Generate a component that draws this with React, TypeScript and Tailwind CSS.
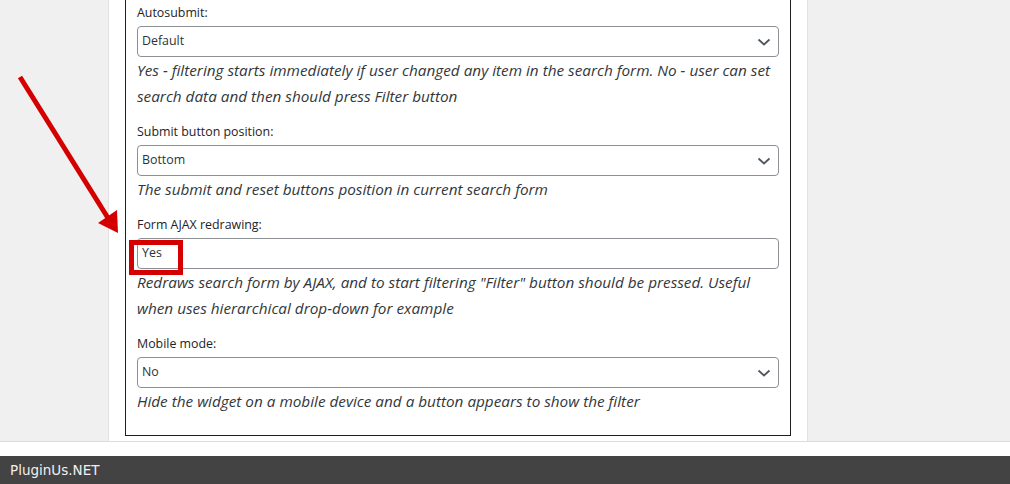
import { ReactNode } from "react";

const Chevron = () => (
	<svg width="14" height="8" viewBox="0 0 14 8" className="absolute right-[7px] top-1/2 -translate-y-1/2">
		<path d="M1.5 1.5 L7 6.5 L12.5 1.5" fill="none" stroke="#50575e" strokeWidth="1.8" />
	</svg>
);

function Field({
	label,
	value,
	select = true,
	children,
}: {
	label: string;
	value: string;
	select?: boolean;
	children: ReactNode;
}) {
	return (
		<div className="mb-[13px]">
			<div className="mb-[3px] text-[12.4px] leading-[20px] text-[#1d2327]">{label}</div>
			<div className="relative flex h-[31px] items-center rounded-[4px] border border-[#8c8f94] bg-white pl-[4px] text-[12.4px] text-[#2c3338]">
				{value}
				{select && <Chevron />}
			</div>
			<p className="text-[15.3px] italic leading-[26px] text-[#32373c]">{children}</p>
		</div>
	);
}

export default function App() {
	return (
		<div className="relative h-[484px] w-[1010px] overflow-hidden bg-white font-['Open_Sans',sans-serif]">
			<div className="h-[442px] overflow-hidden border-b border-[#dcdcde] bg-[#f0f0f0]">
				<div className="ml-[108px] flex h-full w-[700px] flex-col border-x border-[#e2e2e2] bg-white px-4">
					<div className="-mt-[20px] border border-[#1e1e1e] px-[11px] pb-[8px] pt-[22px]">
						<Field label="Autosubmit:" value="Default">
							Yes - filtering starts immediately if user changed any item in the search form. No - user can set
							<br />
							search data and then should press Filter button
						</Field>
						<Field label="Submit button position:" value="Bottom">
							The submit and reset buttons position in current search form
						</Field>
						<Field label="Form AJAX redrawing:" value="Yes" select={false}>
							Redraws search form by AJAX, and to start filtering "Filter" button should be pressed. Useful
							<br />
							when uses hierarchical drop-down for example
						</Field>
						<Field label="Mobile mode:" value="No">
							Hide the widget on a mobile device and a button appears to show the filter
						</Field>
					</div>
				</div>
			</div>
			<div className="h-[14px]" />
			<footer className="flex h-[28px] items-center bg-[#434343] pl-[10px] font-['DejaVu_Sans',sans-serif] text-[13.5px] text-[#f0f0f0]">
				PluginUs.NET
			</footer>

			{/* annotation */}
			<div className="pointer-events-none absolute left-[129px] top-[240px] h-[35px] w-[54px] border-[5px] border-[#d40000]" />
			<svg className="pointer-events-none absolute left-0 top-0" width="1010" height="484">
				<line x1="20" y1="77" x2="108" y2="218" stroke="#d40000" strokeWidth="5" />
				<polygon points="118,233 98,223 117,210" fill="#d40000" />
			</svg>
		</div>
	);
}
